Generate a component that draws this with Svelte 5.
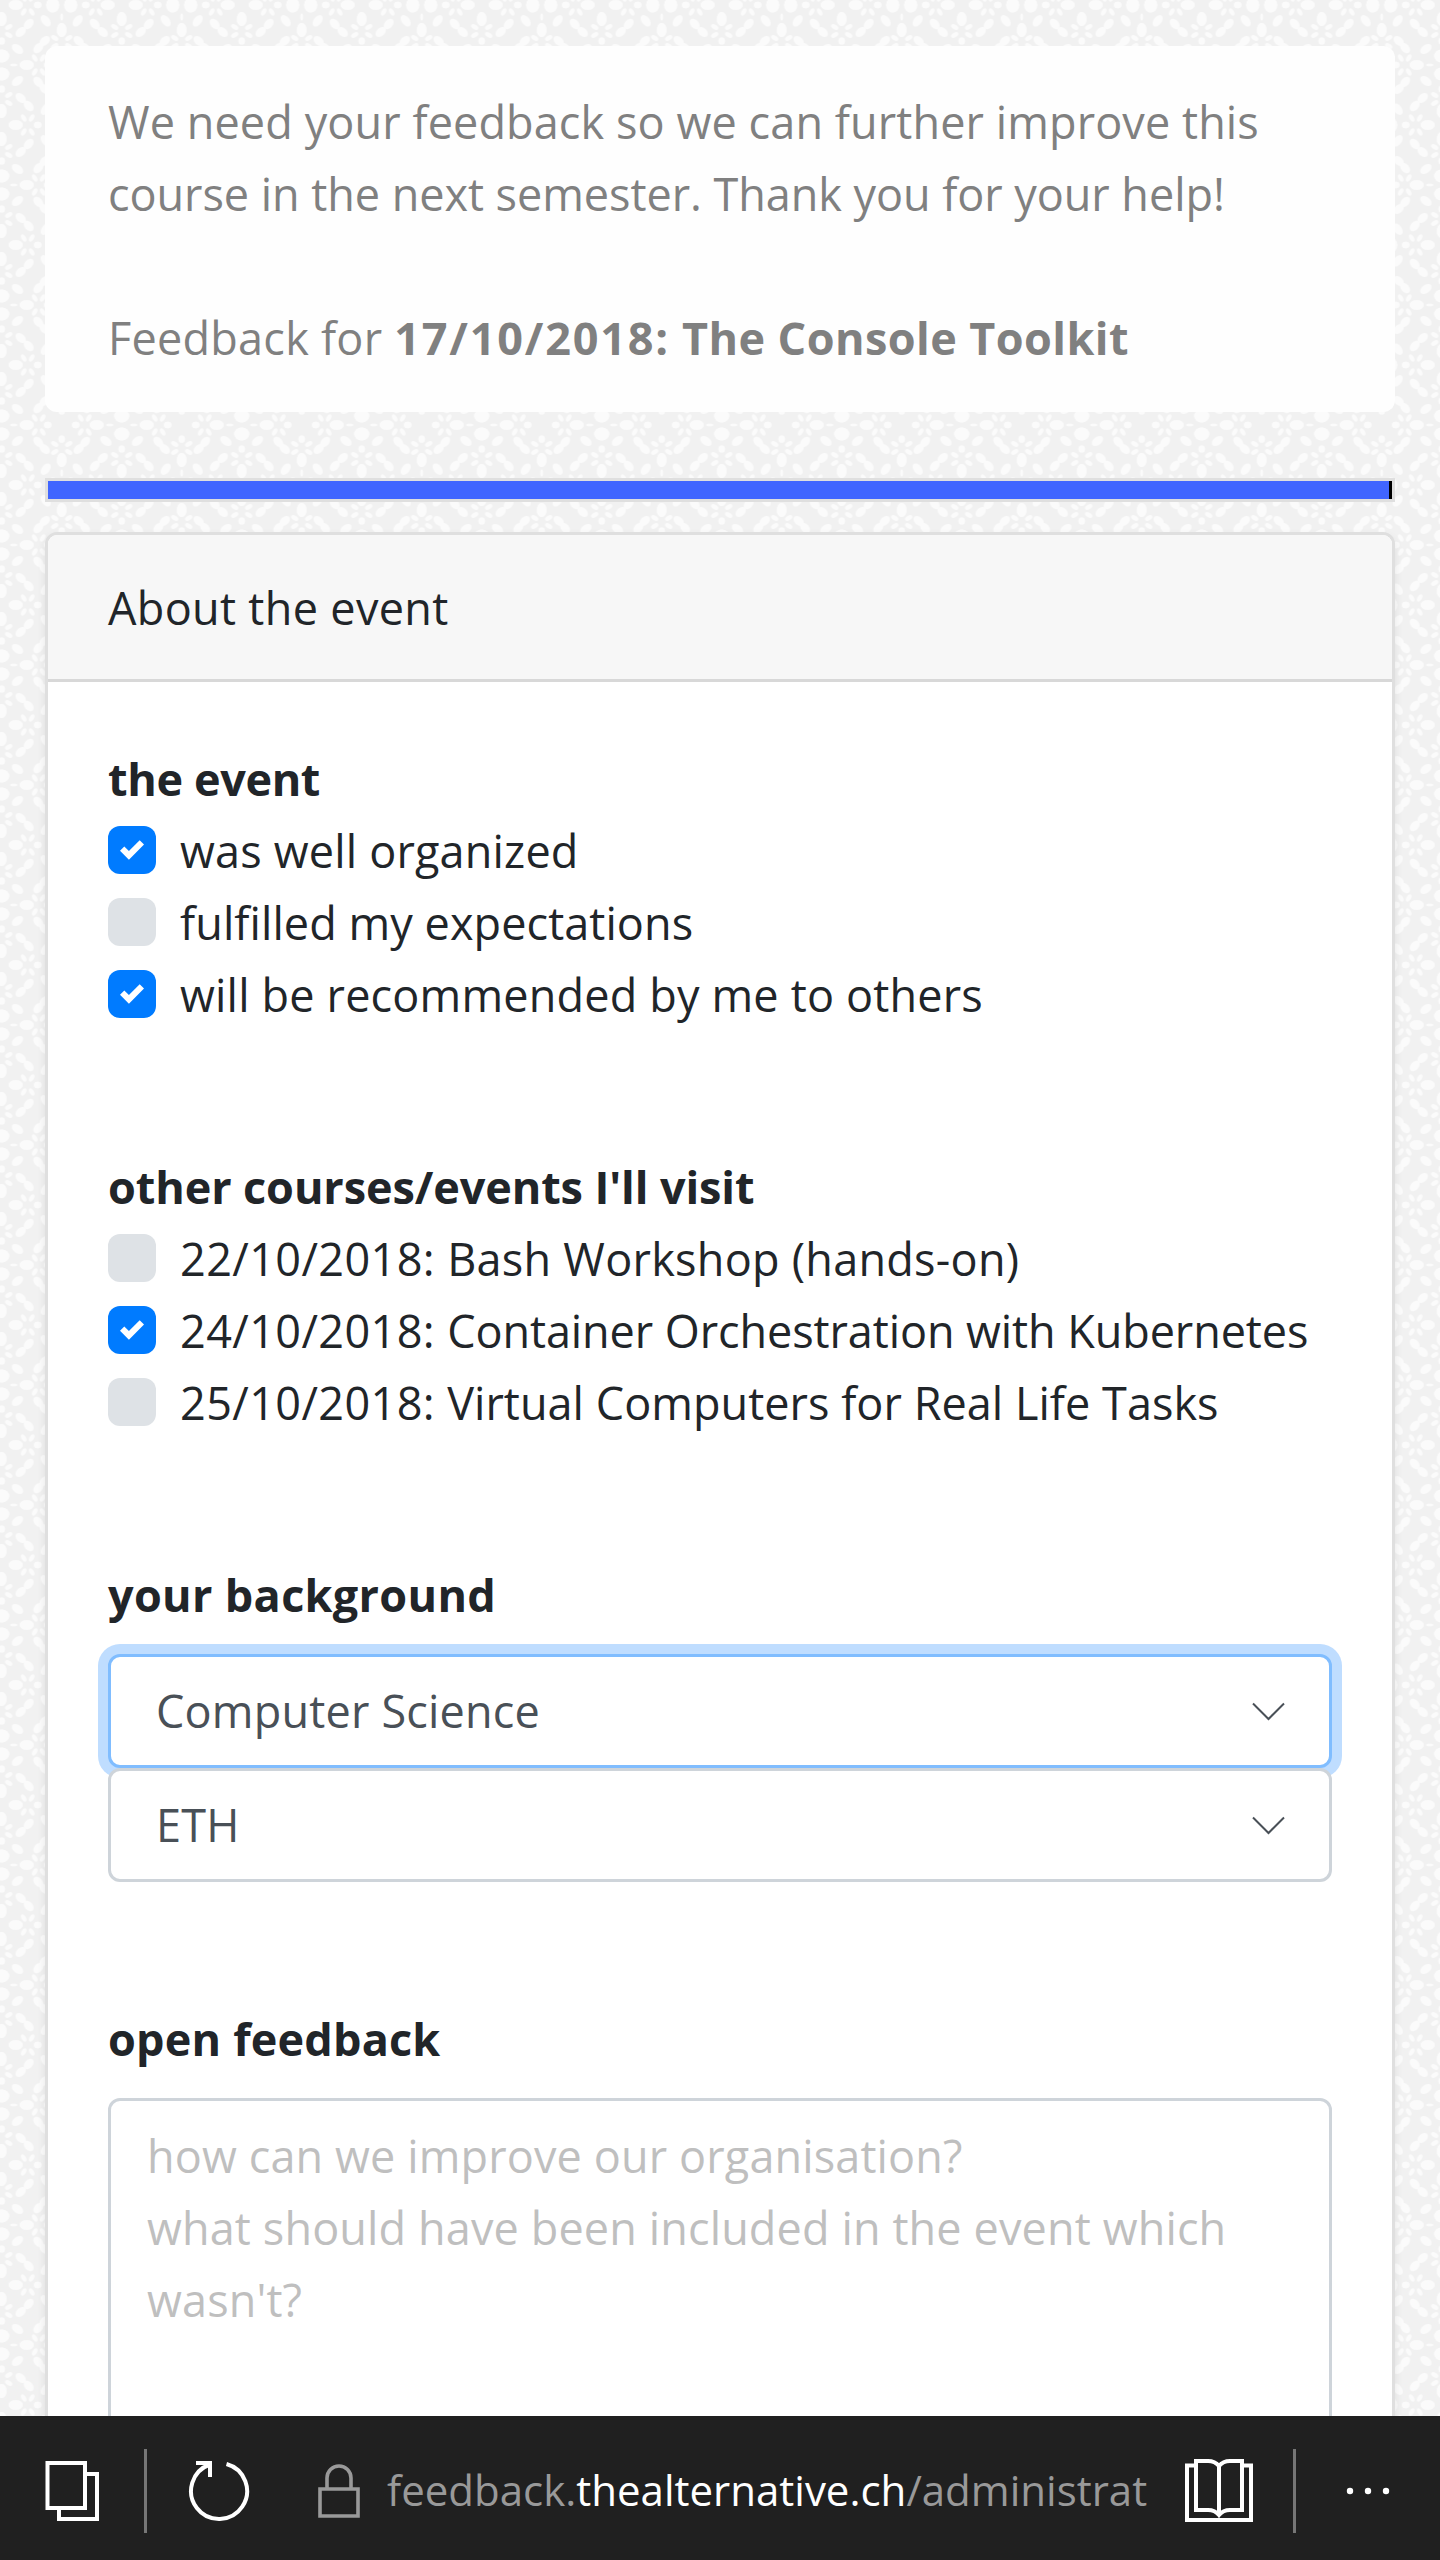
<script>
  // Each text run carries its own tracking, in px
  const groups = [
    { title: 'the event', track: -0.36, items: [
      { label: 'was well organized', track: 0.18, on: true },
      { label: 'fulfilled my expectations', track: 0.07 },
      { label: 'will be recommended by me to others', track: 0.18, on: true }
    ] },
    { title: "other courses/events I'll visit", track: -0.1, items: [
      { date: '22/10/2018: ', label: 'Bash Workshop (hands-on)', track: 0.27 },
      { date: '24/10/2018: ', label: 'Container Orchestration with Kubernetes', track: -0.08, on: true },
      { date: '25/10/2018: ', label: 'Virtual Computers for Real Life Tasks', track: 0.04 }
    ] }
  ];
  const selects = ['Computer Science', 'ETH'];
  const placeholder = ['how can we improve our organisation?', 'what should have been included in the event which', "wasn't?"];
  // Quadrant of the lace tile around its centre: [x, y, rx, ry, rotation]
  const petals = [
    [0, 9, 7.5, 6.5, 0], [12, 0, 3.5, 1.2, 0], [25, 0, 7, 4.8, 0],
    [33, 7, 2.2, 4, 30], [41, 7, 2.2, 4, -30], [46, 0, 3.6, 3.2, 0],
    [0, 24, 3.2, 3.6, 0], [7, 30, 4, 2.2, -30], [7, 38, 4, 2.2, 30], [0, 46, 4.8, 7, 0],
    [15.8, 16, 6.5, 4, -38], [36.6, 17, 6, 4, 48], [43, 24, 6, 4, 42],
    [19, 33, 6, 4, 42], [27, 41, 6, 4, 48], [44, 44.2, 6.5, 4, -52]
  ];
  const lace = [...petals, ...petals.slice(0, 10).map(([x, y, rx, ry, r]) => [60 - y, 60 - x, ry, rx, -r])];
  const quads = [[1, 1], [-1, 1], [1, -1], [-1, -1]];
</script>

<div class="page">
  <svg class="paper" width="1440" height="2416">
    <defs>
      <pattern id="lace" width="120" height="120" patternUnits="userSpaceOnUse" x="1.7" y="65">
        {#each [[0, 0], [120, 0], [0, 120], [120, 120]] as [ox, oy]}
          {#each quads as [sx, sy]}
            <g transform="translate({ox} {oy}) scale({sx} {sy})">
              {#each lace as [x, y, rx, ry, r]}
                <ellipse cx={x} cy={y} {rx} {ry} transform="rotate({r} {x} {y})" />
              {/each}
            </g>
          {/each}
        {/each}
      </pattern>
    </defs>
    <rect width="1440" height="2416" fill="url(#lace)" />
  </svg>
  <main>
    <section class="intro">
      <p class="l1">We need your feedback so we can further improve this</p>
      <p class="l2">course in the next semester. Thank you for your help!</p>
      <p class="l3">Feedback for <b><span class="when">17/10/2018:</span> The Console Toolkit</b></p>
    </section>
    <div class="progress"><div class="fill"></div></div>
    <section class="card">
      <header>About the event</header>
      <div class="body">
        {#each groups as g}
          <div class="group">
            <h2 style:letter-spacing="{g.track}px">{g.title}</h2>
            {#each g.items as item}
              <div class="check">
                <span class="box" class:on={item.on}>
                  {#if item.on}<svg width="24" height="24" viewBox="0 0 8 8"><path fill="#fff" d="M6.564.75l-3.59 3.612-1.538-1.55L0 4.26 2.974 7.25 8 2.193z" /></svg>{/if}
                </span>
                <span class="label" style:letter-spacing="{item.track}px">{#if item.date}<span class="date">{item.date}</span>{/if}{item.label}</span>
              </div>
            {/each}
          </div>
        {/each}
        <div class="group back">
          <h2>your background</h2>
          {#each selects as s, i}
            <div class="select" class:focus={i === 0}>
              <span>{s}</span>
              <svg width="34" height="20" viewBox="0 0 34 20"><path d="M1 2.5 16.5 18 32 2.5" fill="none" stroke="#495057" stroke-width="2" /></svg>
            </div>
          {/each}
        </div>
        <div class="group open">
          <h2>open feedback</h2>
          <div class="area">
            {#each placeholder as p}<p>{p}</p>{/each}
          </div>
        </div>
      </div>
    </section>
  </main>
  <footer>
    <svg class="tabs" width="54" height="62" viewBox="0 0 54 62" fill="none" stroke="#fff" stroke-width="4"><path d="M2.5 3h37.5v45H2.5zM42 14h10v45H14V50" /></svg>
    <i></i>
    <svg class="reload" width="62" height="62" viewBox="0 0 62 62" fill="none" stroke="#fff" stroke-width="4"><path d="M38.5 4A28 28 0 1 1 22 4.5M8 3h14v14" /></svg>
    <svg class="lock" width="42" height="56" viewBox="0 0 42 56" fill="none" stroke="#999" stroke-width="3.6"><path d="M2 26h38v27H2zM9 26V15a12 12 0 0 1 24 0v11" /></svg>
    <div class="url">feedback.<b>thealternative.ch</b>/administrat</div>
    <svg class="book" width="68" height="66" viewBox="0 0 68 66" fill="none" stroke="#fff" stroke-width="4"><path d="M11 7.5H2V62h64V7.5h-9M11 3h12q7 0 11 5 4-5 11-5h12v49H45q-7 0-11 5-4-5-11-5H11zM34 8v50" /></svg>
    <i class="second"></i>
    <svg class="dots" width="44" height="8" viewBox="0 0 44 8" fill="#fff"><circle cx="4" cy="4" r="3.2" /><circle cx="22" cy="4" r="3.2" /><circle cx="40" cy="4" r="3.2" /></svg>
  </footer>
</div>

<style>
  :global(body) { margin: 0; }
  .page { position: relative; width: 1440px; height: 2560px; overflow: hidden; background: #f1f1f1; display: flex; flex-direction: column; font: 45px/72px 'Open Sans', 'Noto Sans', sans-serif; color: #212529; white-space: nowrap; box-sizing: border-box; }
  .page * { box-sizing: border-box; }
  .paper { position: absolute; left: 0; top: 0; fill: #fbfbfb; }
  p, h2 { margin: 0; font-size: 45px; line-height: 72px; }
  h2, b { font-weight: 700; }
  main { position: relative; height: 2416px; padding: 46px 45px 0; overflow: hidden; }
  .intro { height: 366px; padding: 40px 63px 0; background: #fefefe; border-radius: 12px; color: #808080; }
  .l1 { letter-spacing: 0.1px; }
  .l2 { letter-spacing: -0.045px; }
  .l3 { margin-top: 72px; letter-spacing: 0.25px; }
  .l3 b { letter-spacing: 0.42px; }
  .l3 .when { letter-spacing: 1.8px; }
  .progress { height: 24px; margin-top: 66px; border: 3px solid #dfdfdf; background: #000; }
  .fill { height: 18px; width: 1341px; background: #4065ff; }
  .card { margin-top: 30px; height: 2100px; border: 3px solid #dfdfdf; border-radius: 12px; background: #fff; box-shadow: 0 4px 8px rgba(0,0,0,.08); }
  header { height: 147px; padding: 37px 60px 0; background: #f7f7f7; border-bottom: 3px solid #d8d8d8; border-radius: 9px 9px 0 0; letter-spacing: 0.33px; }
  .body { padding: 61px 60px 0; }
  .group { margin-bottom: 120px; }
  .check { display: flex; align-items: center; height: 72px; gap: 24px; }
  .box { width: 48px; height: 48px; margin-bottom: 2px; border-radius: 12px; background: #dee2e6; display: flex; align-items: center; justify-content: center; }
  .on { background: #007bff; }
  .label { white-space: pre; }
  .date { letter-spacing: 0.4px; }
  .select { position: relative; height: 114px; border: 3px solid #ced4da; border-radius: 12px; background: #fff; color: #495057; padding: 0 43px 0 45px; display: flex; align-items: center; justify-content: space-between; letter-spacing: 0.2px; }
  .back { margin-bottom: 121px; }
  .back h2 { margin-bottom: 23px; letter-spacing: 0.33px; }
  .focus { border-color: #80bdff; box-shadow: 0 0 0 10px #bfddff; }
  .open h2 { letter-spacing: 0.19px; }
  .area { margin-top: 23px; height: 500px; border: 3px solid #ced4da; border-radius: 12px; padding: 19px 36px; color: #bfbfbf; letter-spacing: 0.13px; }
  footer { position: relative; height: 144px; background: #202020; display: flex; align-items: center; padding: 6px 0 0 45px; color: #999; }
  footer svg { flex: none; }
  footer i { flex: none; width: 3px; height: 84px; background: #767676; margin-left: 45px; }
  .reload { margin-left: 41px; }
  .lock { margin-left: 68px; }
  .url { flex: none; margin-left: 27px; width: 770px; font-size: 42px; padding-bottom: 2px; }
  .url b { color: #fff; font-weight: 400; }
  .book { margin-left: 28px; }
  footer .second { margin-left: 40px; }
  .dots { margin-left: 50px; }
</style>
